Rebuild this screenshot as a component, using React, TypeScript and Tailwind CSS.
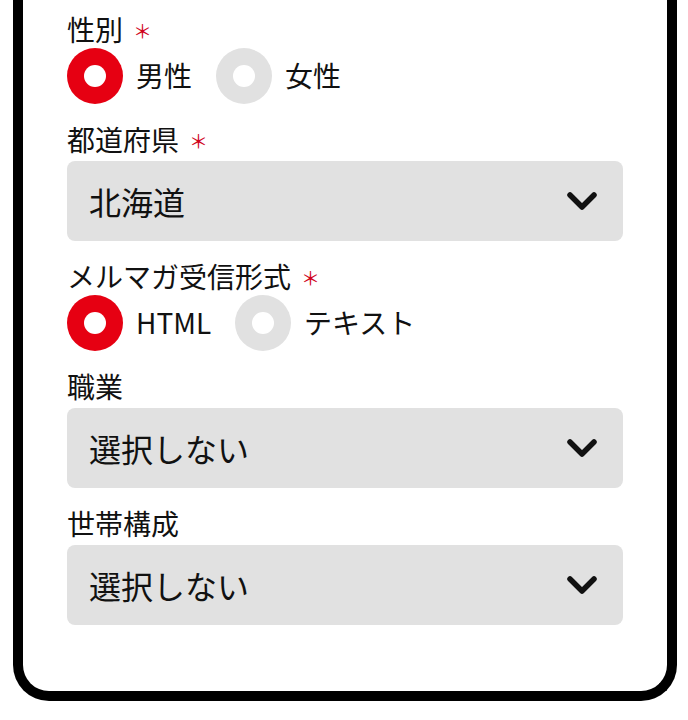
import React from 'react';

const font = { fontFamily: '"Noto Sans CJK JP", "Noto Sans", sans-serif' };

function Label({ text, required }: { text: string; required?: boolean }) {
  return (
    <div className="flex items-center text-[28px] leading-[38px] text-[#111]">
      <span>{text}</span>
      {required && (
        <span className="ml-[10px] mt-[3px] text-[19px] leading-none text-[#d0021b]">＊</span>
      )}
    </div>
  );
}

function Radio({ label, checked }: { label: string; checked?: boolean }) {
  return (
    <div className="flex items-center gap-[13px]">
      <div
        className={`w-14 h-14 rounded-full flex items-center justify-center ${
          checked ? 'bg-[#e60012]' : 'bg-[#e1e1e1]'
        }`}
      >
        <div className="w-[22px] h-[22px] rounded-full bg-white" />
      </div>
      <span className="text-[28px] leading-none text-[#111] -mt-[3px]">{label}</span>
    </div>
  );
}

function Select({ value }: { value: string }) {
  return (
    <div className="mt-[3px] h-20 rounded-lg bg-[#e1e1e1] flex items-center justify-between pl-[22px] pr-[26px]">
      <span className="text-[32px] leading-none text-[#111]">{value}</span>
      <svg width="30" height="20" viewBox="0 0 30 20" fill="none">
        <polyline
          points="3,4 15,16 27,4"
          stroke="#111"
          strokeWidth="5.5"
          strokeLinecap="round"
          strokeLinejoin="round"
        />
      </svg>
    </div>
  );
}

export default function App() {
  return (
    <div className="bg-white pl-[13px] pr-[11px] pb-[21px]" style={font}>
      <div className="border-[10px] border-t-0 border-black rounded-b-[36px] bg-white px-[44px] pt-[10px] pb-[66px] flex flex-col gap-4">
        <div className="flex flex-col">
          <Label text="性別" required />
          <div className="flex items-center gap-[24px]">
            <Radio label="男性" checked />
            <Radio label="女性" />
          </div>
        </div>
        <div className="flex flex-col">
          <Label text="都道府県" required />
          <Select value="北海道" />
        </div>
        <div className="flex flex-col">
          <Label text="メルマガ受信形式" required />
          <div className="flex items-center gap-[24px]">
            <Radio label="HTML" checked />
            <Radio label="テキスト" />
          </div>
        </div>
        <div className="flex flex-col">
          <Label text="職業" />
          <Select value="選択しない" />
        </div>
        <div className="flex flex-col">
          <Label text="世帯構成" />
          <Select value="選択しない" />
        </div>
      </div>
    </div>
  );
}
